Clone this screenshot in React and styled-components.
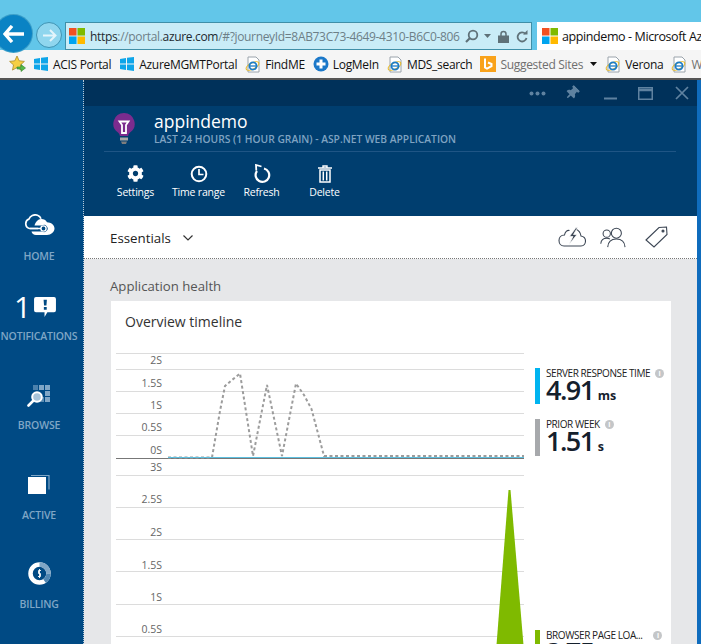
import React from "react";
import styled, { createGlobalStyle } from "styled-components";
import { FaCog, FaThumbtack } from "react-icons/fa";

const Global = createGlobalStyle`
  html, body { margin: 0; padding: 0; background: #fff; }
  * { box-sizing: border-box; }
  svg { flex: none; }
`;
const FONT = `"Open Sans", "Noto Sans", "Liberation Sans", sans-serif`;

const Root = styled.div`
  width: 701px; height: 644px; overflow: hidden; display: flex; flex-direction: column;
  font-family: ${FONT};
`;
const ChromeTop = styled.div`
  height: 50px; flex: none; background: #62c6e9; display: flex; align-items: flex-start;
  padding-top: 15px; position: relative;
`;
const BackButton = styled.div`
  width: 37px; height: 37px; margin-left: -5px; border-radius: 50%; background: #0a83c4;
  display: flex; align-items: center; justify-content: center; flex: none;
  box-shadow: 0 0 0 1px #3c9fc9;
`;
const ForwardButton = styled.div`
  width: 26px; height: 26px; margin: 7px 0 0 4px; border-radius: 50%; background: #8fd6ee;
  border: 1px solid #3f94b4; display: flex; align-items: center; justify-content: center; flex: none;
`;
const AddressBar = styled.div`
  width: 467px; height: 28px; margin: 7px 0 0 3px; background: #c9ecf7; border: 1px solid #3f8fa8;
  display: flex; align-items: center; padding-left: 3px; flex: none;
`;
const UrlText = styled.div`
  font-size: 12px; letter-spacing: -0.33px; color: #6d7f87; margin-left: 5px; white-space: nowrap; width: 372px; overflow: hidden;
  b { font-weight: 400; color: #1e2a30; }
`;
const AddressTools = styled.div`
  display: flex; align-items: center; gap: 7px; margin-left: 3px;
`;
const Caret = styled.svg`
  margin-left: -2px;
`;
const Tab = styled.div`
  width: 166px; height: 28px; margin: 7px 0 0 5px; background: #fff; display: flex; align-items: center;
  padding-left: 5px; font-size: 12.5px; letter-spacing: -0.4px; color: #111; white-space: nowrap; overflow: hidden; flex: none;
  span { margin-left: 4px; }
`;
const Bookmarks = styled.div`
  height: 30px; flex: none; background: #f5f5f5; border-bottom: 2px solid #555; display: flex; align-items: center;
  padding-left: 9px; white-space: nowrap; overflow: hidden;
`;
const Bookmark = styled.div`
  display: flex; align-items: center; gap: 4px; font-size: 12px; letter-spacing: -0.3px; flex: none;
  margin-left: ${(p) => p.$gap ?? 8}px; color: ${(p) => (p.$muted ? "#6f6f6f" : "#111")};
`;
const BookmarkCaret = styled.svg`
  margin-left: 3px;
`;
const Main = styled.div`
  flex: 1; display: flex; min-height: 0;
`;
const Sidebar = styled.nav`
  width: 84px; flex: none; background: #004a84; border-right: 1px dotted #b8c8d6; display: flex; flex-direction: column;
  padding-right: 5px;
`;
const NavItem = styled.div`
  height: ${(p) => p.$h}px; flex: none; display: flex; flex-direction: column; align-items: center; justify-content: flex-end;
  color: #7fa6c6; font-size: 10.5px; font-weight: 600;
`;
const NavIcon = styled.div`
  display: flex; align-items: center; justify-content: center; height: 40px; margin-bottom: ${(p) => p.$mb}px; color: #fff;
`;
const NavNumber = styled.span`
  font-size: 30px; font-weight: 400; color: #fff; line-height: 40px; margin: 0 3px 0 -8px;
`;
const NavLabel = styled.div`
  line-height: 14px; letter-spacing: -0.2px; white-space: nowrap;
`;
const Blade = styled.div`
  flex: 1; min-width: 0; display: flex; flex-direction: column; border-right: 4px solid #0f6cbd; position: relative;
`;
const TitleBar = styled.div`
  height: 26px; flex: none; background: #00315a; display: flex; align-items: center; justify-content: flex-end;
  color: #5f82a0;
`;
const WinButton = styled.div`
  width: ${(p) => p.$w}px; display: flex; justify-content: center; align-items: center; flex: none;
`;
const Header = styled.header`
  height: 110px; flex: none; background: #003e6f; padding: 0 21px 0 20px; color: #fff; display: flex; flex-direction: column;
`;
const TitleRow = styled.div`
  height: 46px; flex: none; border-bottom: 1px solid #1f5585; display: flex; align-items: center; padding: 0 0 0 9px;
`;
const TitleText = styled.div`
  margin-left: 19px; display: flex; flex-direction: column;
`;
const Title = styled.div`
  font-size: 17.5px; line-height: 22px; margin-top: -2px;
`;
const Subtitle = styled.div`
  font-size: 10.25px; line-height: 13px; font-weight: 600; color: #7fa3c2; white-space: nowrap; margin-top: 1px;
`;
const Toolbar = styled.div`
  display: flex; margin-top: 11px;
`;
const ToolButton = styled.div`
  width: 63px; display: flex; flex-direction: column; align-items: center; font-size: 10.5px; letter-spacing: -0.2px; white-space: nowrap;
`;
const ToolIcon = styled.div`
  height: 21px; display: flex; align-items: center; justify-content: center; margin-bottom: 1px;
`;
const EssentialsBar = styled.div`
  height: 43px; flex: none; background: #fff; border-bottom: 1px dotted #777; display: flex; align-items: center;
  padding: 2px 29px 0 26px; font-size: 13.3px; color: #222;
`;
const Chevron = styled.svg`
  margin-left: 12px;
`;
const EssentialIcons = styled.div`
  margin-left: auto; display: flex; align-items: center; margin-top: -2px;
`;
const EssentialIcon = styled.div`
  display: flex; margin-left: ${(p) => p.$ml}px;
`;
const Content = styled.div`
  flex: 1; background: #e6e7e9; padding: 17px 26px 0 26px; min-height: 0; display: flex; flex-direction: column;
`;
const SectionTitle = styled.div`
  font-size: 13.2px; color: #555; line-height: 20px; margin-bottom: 5px;
`;
const Card = styled.section`
  flex: 1; background: #fff; margin-left: 1px; min-height: 0; display: flex; flex-direction: column; overflow: hidden;
`;
const CardTitle = styled.div`
  font-size: 14px; color: #333; padding: 11px 14px 0; line-height: 20px; height: 45px; flex: none;
`;
const ChartRow = styled.div`
  display: flex; flex: 1; min-height: 0;
`;
const ChartSvg = styled.svg`
  width: 413px; height: 299px; flex: none; display: block;
`;
const Legend = styled.div`
  margin-left: 11px; padding-top: 22px; display: flex; flex-direction: column; min-width: 0;
`;
const Metric = styled.div`
  display: flex; height: ${(p) => p.$h}px; margin-bottom: ${(p) => p.$mb}px; flex: none;
`;
const MetricBar = styled.div`
  width: 5px; background: ${(p) => p.$c}; margin-right: 6px; flex: none;
`;
const MetricBody = styled.div`
  display: flex; flex-direction: column; color: #14202c;
`;
const MetricLabel = styled.div`
  font-size: 10px; line-height: 11px; letter-spacing: -0.42px; white-space: nowrap; display: flex; align-items: center; color: #222;
`;
const Info = styled.span`
  width: 9px; height: 9px; border-radius: 50%; background: #c4c6c8; color: #fff; font-size: 7px; font-weight: 700;
  display: inline-flex; align-items: center; justify-content: center; margin-left: ${(p) => p.$ml ?? 5}px; line-height: 1; letter-spacing: 0;
`;
const MetricValue = styled.div`
  font-size: 27px; line-height: 27px; font-weight: 600; letter-spacing: -1.5px; white-space: nowrap; margin-top: -3px;
  small { font-size: 12.5px; font-weight: 700; margin-left: 4px; letter-spacing: 0; }
`;

const WinLogo = () => (
  <svg width="16" height="16" viewBox="0 0 16 16">
    <path fill="#0ea5e9" d="M1 3l6-1v5.5H1zM8 1.8L15 1v6.5H8zM1 8.5h6V14l-6-1zM8 8.5h7V15l-7-1z" />
  </svg>
);
const MsLogo = ({ s = 16 }) => (
  <svg width={s} height={s} viewBox="0 0 16 16">
    <rect width="7.5" height="7.5" fill="#f25022" />
    <rect x="8.5" width="7.5" height="7.5" fill="#7fba00" />
    <rect y="8.5" width="7.5" height="7.5" fill="#00a4ef" />
    <rect x="8.5" y="8.5" width="7.5" height="7.5" fill="#ffb900" />
  </svg>
);
const IeIcon = () => (
  <svg width="16" height="17" viewBox="0 0 16 17">
    <path d="M3 1h8l3 3v12H3z" fill="#fff" stroke="#9aa3ab" />
    <ellipse cx="7.5" cy="10" rx="7" ry="3" fill="none" stroke="#e8b923" strokeWidth="1.1" transform="rotate(-28 7.5 10)" />
    <circle cx="8" cy="10" r="3.6" fill="none" stroke="#1c7cc7" strokeWidth="1.8" />
    <path d="M4.8 10h6.4" stroke="#1c7cc7" strokeWidth="1.3" />
  </svg>
);
const BingIcon = () => (
  <svg width="16" height="16" viewBox="0 0 16 16">
    <rect width="16" height="16" fill="#f9a21b" />
    <path d="M5 2.5v9l2 1.2 4.5-2.5V8L8 6.5" fill="none" stroke="#fff" strokeWidth="2" />
  </svg>
);
const LogMeIn = () => (
  <svg width="16" height="16" viewBox="0 0 16 16">
    <circle cx="8" cy="8" r="7.5" fill="#1b78c9" />
    <path d="M8 3.5v9M3.5 8h9" stroke="#fff" strokeWidth="3" />
  </svg>
);
const Star = () => (
  <svg width="17" height="18" viewBox="0 0 17 18">
    <path d="M8 1l2.2 4.8 5.2.6-3.9 3.5 1 5.2L8 12.500l-4.500 2.600 1-5.200L.6 6.400l5.200-.6z" fill="#f6cf45" stroke="#a98a2a" strokeWidth=".8" />
    <path d="M8 12h4V9.500l4.500 3.500-4.500 3.500V14H8z" fill="#54b948" stroke="#2f7f2a" strokeWidth=".6" />
  </svg>
);

const ClockIcon = () => (
  <svg width="18" height="18" viewBox="0 0 18 18">
    <circle cx="9" cy="9" r="7.300" fill="none" stroke="#fff" strokeWidth="2" />
    <path d="M9 4v5.500h4.500" fill="none" stroke="#fff" strokeWidth="1.700" />
  </svg>
);
const RefreshIcon = () => (
  <svg width="18" height="20" viewBox="0 0 18 20" fill="none" stroke="#fff">
    <path d="M11 4.500A6.800 6.800 0 1 1 4 7" strokeWidth="2.200" />
    <path d="M8.500 2.500L3 1l.3 5.500" strokeWidth="1.800" />
  </svg>
);
const TrashIcon = () => (
  <svg width="14" height="18" viewBox="0 0 14 18">
    <path d="M0 3h14M5 3V1h4v2" fill="none" stroke="#fff" strokeWidth="1.400" />
    <path d="M2 5h10v12H2z" fill="none" stroke="#fff" strokeWidth="1.500" />
    <path d="M5.300 6.500v9M8.700 6.500v9" stroke="#fff" strokeWidth="1.500" />
  </svg>
);
const BulbIcon = () => (
  <svg width="22" height="32" viewBox="0 0 22 32">
    <path d="M11 0a10.700 10.700 0 0 0-6 19.500c1 .8 1.700 2 1.900 3.500h8.200c.2-1.500.9-2.700 1.900-3.500A10.700 10.700 0 0 0 11 0z" fill="#7b2c8e" />
    <path d="M6.500 8.500h9L13 12v8h-4v-8z" fill="none" stroke="#fff" strokeWidth="1.800" />
    <path d="M7 24.500h8v3H7z" fill="#a6a6a6" />
    <path d="M8 28.500h6l-1 2.500H9z" fill="#7d7d7d" />
  </svg>
);
const CloudBolt = () => (
  <svg width="28" height="21" viewBox="0 0 28 21" fill="none" stroke="#3c4654" strokeWidth="1.100">
    <path d="M11.500 3.500C9 3 7 5 6.500 8 3 8 1 10.500 1 13.500 1 16.500 3 19 6 19h17c3 0 4.500-2.500 4.500-5 0-3-2-4.500-4.500-5C22.500 5.500 20 3 17.500 2" />
    <path d="M18 .5l-6.500 9H15l-4 8 8-10h-3.500L19.500.5z" fill="#3c4654" stroke="#fff" strokeWidth=".7" />
  </svg>
);
const UsersIcon = () => (
  <svg width="26" height="21" viewBox="0 0 27 21" fill="none" stroke="#3c4654" strokeWidth="1.100">
    <circle cx="7" cy="6.500" r="3.800" />
    <circle cx="17" cy="6" r="5.200" />
    <path d="M.8 17c.3-3.500 2.500-5.700 6.200-5.700 1.300 0 2.500.3 3.300.8" />
    <path d="M8 20.500c.3-5 3.500-8.500 9-8.500s8.800 3.500 9 8.500" />
  </svg>
);
const TagIcon = () => (
  <svg width="23" height="22" viewBox="0 0 23 22" fill="none" stroke="#3c4654" strokeWidth="1.100">
    <path d="M1 14L14 1.500 21.500 1 22 8.500 9 21z" />
    <circle cx="18" cy="5" r="1" fill="#3c4654" />
  </svg>
);
const HomeIcon = () => (
  <svg width="32" height="21" viewBox="0 0 32 21">
    <path d="M15 14.500H6.500a5 5 0 0 1-.5-9.500C7 2 11 0 14.500 1.200c2 .7 3 2 3.500 3.500" fill="none" stroke="#fff" strokeWidth="1.700" />
    <path d="M18 5a6.500 6.500 0 0 1 6 3.200c4 0 7.500 2.800 7.500 6.300S28 21 24 21H13c-2.500 0-4-1.500-4.500-3.500h10.500a3.600 3.600 0 1 0 0-6H11.500C12.500 8 15 5 18 5z" fill="#fff" />
    <circle cx="20.500" cy="14.500" r="2.600" fill="none" stroke="#fff" strokeWidth="1.400" />
    <path d="M7 14.500h11" stroke="#fff" strokeWidth="1.500" />
  </svg>
);
const BubbleIcon = () => (
  <svg width="22" height="20" viewBox="0 0 23 21">
    <path d="M2 0h19a2 2 0 0 1 2 2v12a2 2 0 0 1-2 2h-7l-3 5v-5H2a2 2 0 0 1-2-2V2a2 2 0 0 1 2-2z" fill="#fff" />
    <path d="M10 3h3.500l-.5 6h-2.500zM10.300 10.500h3v2.800h-3z" fill="#004a84" />
  </svg>
);
const BrowseIcon = () => (
  <svg width="24" height="22" viewBox="0 0 24 22">
    <g fill="#7fa6c6">
      <rect x="12" y="0" width="5" height="5" /><rect x="18" y="0" width="5" height="5" />
      <rect x="6" y="0" width="5" height="5" opacity=".6" />
      <rect x="18" y="6" width="5" height="5" /><rect x="18" y="12" width="5" height="5" />
      <rect x="12" y="12" width="5" height="5" opacity=".7" />
    </g>
    <circle cx="10" cy="12" r="4.800" fill="#a8c4da" stroke="#fff" strokeWidth="2" />
    <path d="M6 16l-4.500 4.500" stroke="#fff" strokeWidth="2.600" strokeLinecap="round" />
  </svg>
);
const ActiveIcon = () => (
  <svg width="22" height="19" viewBox="0 0 22 19">
    <path d="M3 .5h18v14" fill="none" stroke="#7fa6c6" strokeWidth="1.200" />
    <rect x="0" y="2" width="18" height="17" fill="#fff" />
  </svg>
);
const BillingIcon = () => (
  <svg width="23" height="23" viewBox="0 0 23 23">
    <circle cx="11.500" cy="11.500" r="9" fill="none" stroke="#fff" strokeWidth="4.500" />
    <path d="M11.500 2.500a9 9 0 0 1 9 9" fill="none" stroke="#7fa6c6" strokeWidth="4.500" />
    <path d="M20.500 11.500a9 9 0 0 1-4 7.500" fill="none" stroke="#4f86b2" strokeWidth="4.500" />
    <circle cx="11.500" cy="11.500" r="5" fill="#004a84" />
    <path d="M13 8.500h-2.500v3h2v3H10M11.500 7v9" fill="none" stroke="#fff" strokeWidth=".9" />
  </svg>
);

const grid1 = [352, 368, 390, 412, 434];
const grid2 = [474, 506, 538, 570, 603, 635];
const labels = [
  ["2S", 363], ["1.5S", 386], ["1S", 408], ["0.5S", 430], ["0S", 453], ["3S", 470],
  ["2.5S", 502], ["2S", 535], ["1.5S", 568], ["1S", 600], ["0.5S", 632],
];

const Chart = () => (
  <ChartSvg viewBox="111 345 413 299">
    {[...grid1, ...grid2].map((y) => (
      <line key={y} x1="116" x2="524" y1={y + 0.5} y2={y + 0.5} stroke="#dcdcdc" strokeWidth="1" />
    ))}
    <line x1="116" x2="524" y1="457.500" y2="457.500" stroke="#777" strokeWidth="1.200" />
    <path
      d="M168 456.500H212L220 410 225 385 232 379 240 372.500 253 455 267 384 282 455 296 382.500 304 394 311.500 408 324 455H524"
      fill="none" stroke="#9c9c9c" strokeWidth="2" strokeDasharray="3 2.500"
    />
    <line x1="168" x2="524" y1="456.500" y2="456.500" stroke="#5cc0e0" strokeWidth="1.200" />
    {labels.map(([t, y]) => (
      <text key={t + y} x="162" y={y} textAnchor="end" fontSize="10.500" fill="#666" fontFamily={FONT}>{t}</text>
    ))}
    <path d="M508.500 489h2L523.500 644h-27z" fill="#7fba00" />
  </ChartSvg>
);

export default function App() {
  return (
    <Root>
      <Global />
      <ChromeTop>
        <BackButton>
          <svg width="22" height="18" viewBox="0 0 22 18">
            <path d="M9 1L2 9l7 8M3 9h18" fill="none" stroke="#fff" strokeWidth="3.400" />
          </svg>
        </BackButton>
        <ForwardButton>
          <svg width="15" height="13" viewBox="0 0 15 13">
            <path d="M8 1l5.500 5.500L8 12M13 6.500H1" fill="none" stroke="#e4f5fb" strokeWidth="2" />
          </svg>
        </ForwardButton>
        <AddressBar>
          <MsLogo />
          <UrlText>
            <b>https</b>://portal.<b>azure.com</b>/#?journeyId=8AB73C73-4649-4310-B6C0-806
          </UrlText>
          <AddressTools>
            <svg width="14" height="14" viewBox="0 0 14 14">
              <circle cx="8" cy="6" r="4.300" fill="none" stroke="#5f7178" strokeWidth="1.800" />
              <path d="M5 9l-4 4" stroke="#5f7178" strokeWidth="2.200" />
            </svg>
            <Caret width="7" height="4" viewBox="0 0 7 4"><path d="M0 0h7L3.500 4z" fill="#5f7178" /></Caret>
            <svg width="11" height="13" viewBox="0 0 11 13">
              <path d="M3 6V4a2.500 2.500 0 0 1 5 0v2" fill="none" stroke="#5f7178" strokeWidth="1.500" />
              <rect y="5.500" width="11" height="7.500" fill="#5f7178" />
            </svg>
            <svg width="12" height="13" viewBox="0 0 12 13">
              <path d="M9.500 4A4.500 4.500 0 1 0 10.500 8" fill="none" stroke="#5f7178" strokeWidth="1.800" />
              <path d="M7 4.500h4.500V0z" fill="#5f7178" />
            </svg>
          </AddressTools>
        </AddressBar>
        <Tab>
          <MsLogo />
          <span>appindemo - Microsoft Azure</span>
        </Tab>
      </ChromeTop>
      <Bookmarks>
        <Star />
        <Bookmark $gap={7}><WinLogo />ACIS Portal</Bookmark>
        <Bookmark><WinLogo />AzureMGMTPortal</Bookmark>
        <Bookmark><IeIcon />FindME</Bookmark>
        <Bookmark><LogMeIn />LogMeIn</Bookmark>
        <Bookmark><IeIcon />MDS_search</Bookmark>
        <Bookmark $muted><BingIcon />Suggested Sites
          <BookmarkCaret width="7" height="4" viewBox="0 0 7 4"><path d="M0 0h7L3.500 4z" fill="#111" /></BookmarkCaret>
        </Bookmark>
        <Bookmark><IeIcon />Verona</Bookmark>
        <Bookmark $muted><IeIcon />Web Slice Gallery</Bookmark>
      </Bookmarks>
      <Main>
        <Sidebar>
          <NavItem $h={183}><NavIcon $mb={5}><HomeIcon /></NavIcon><NavLabel>HOME</NavLabel></NavItem>
          <NavItem $h={80}>
            <NavIcon $mb={2}><NavNumber>1</NavNumber><BubbleIcon /></NavIcon><NavLabel>NOTIFICATIONS</NavLabel>
          </NavItem>
          <NavItem $h={89}><NavIcon $mb={2}><BrowseIcon /></NavIcon><NavLabel>BROWSE</NavLabel></NavItem>
          <NavItem $h={90}><NavIcon $mb={4}><ActiveIcon /></NavIcon><NavLabel>ACTIVE</NavLabel></NavItem>
          <NavItem $h={89}><NavIcon $mb={4}><BillingIcon /></NavIcon><NavLabel>BILLING</NavLabel></NavItem>
        </Sidebar>
        <Blade>
          <TitleBar>
            <WinButton $w={20}>
              <svg width="17" height="5" viewBox="0 0 17 5" fill="currentColor">
                <circle cx="2.500" cy="2.500" r="2" /><circle cx="8.500" cy="2.500" r="2" /><circle cx="14.500" cy="2.500" r="2" />
              </svg>
            </WinButton>
            <WinButton $w={50}><FaThumbtack size={14} style={{ transform: "rotate(45deg)" }} /></WinButton>
            <WinButton $w={26}>
              <svg width="13" height="14" viewBox="0 0 13 14"><path d="M0 12.500h13" stroke="currentColor" strokeWidth="2" /></svg>
            </WinButton>
            <WinButton $w={44}>
              <svg width="15" height="13" viewBox="0 0 15 13" fill="none" stroke="currentColor">
                <rect x=".75" y=".75" width="13.500" height="11.500" strokeWidth="1.500" /><path d="M1 3h13" strokeWidth="2.500" />
              </svg>
            </WinButton>
            <WinButton $w={30}>
              <svg width="14" height="14" viewBox="0 0 14 14"><path d="M1 1l12 12M13 1L1 13" stroke="currentColor" strokeWidth="1.700" /></svg>
            </WinButton>
          </TitleBar>
          <Header>
            <TitleRow>
              <BulbIcon />
              <TitleText>
                <Title>appindemo</Title>
                <Subtitle>LAST 24 HOURS (1 HOUR GRAIN) - ASP.NET WEB APPLICATION</Subtitle>
              </TitleText>
            </TitleRow>
            <Toolbar>
              <ToolButton><ToolIcon><FaCog size={17} /></ToolIcon>Settings</ToolButton>
              <ToolButton><ToolIcon><ClockIcon /></ToolIcon>Time range</ToolButton>
              <ToolButton><ToolIcon><RefreshIcon /></ToolIcon>Refresh</ToolButton>
              <ToolButton><ToolIcon><TrashIcon /></ToolIcon>Delete</ToolButton>
            </Toolbar>
          </Header>
          <EssentialsBar>
            Essentials
            <Chevron width="10" height="6" viewBox="0 0 10 6"><path d="M.5.500L5 5 9.500.5" fill="none" stroke="#333" strokeWidth="1.200" /></Chevron>
            <EssentialIcons>
              <EssentialIcon $ml={0}><CloudBolt /></EssentialIcon>
              <EssentialIcon $ml={14}><UsersIcon /></EssentialIcon>
              <EssentialIcon $ml={19}><TagIcon /></EssentialIcon>
            </EssentialIcons>
          </EssentialsBar>
          <Content>
            <SectionTitle>Application health</SectionTitle>
            <Card>
              <CardTitle>Overview timeline</CardTitle>
              <ChartRow>
                <Chart />
                <Legend>
                  <Metric $h={36} $mb={15}>
                    <MetricBar $c="#00b4f0" />
                    <MetricBody>
                      <MetricLabel>SERVER RESPONSE TIME<Info>i</Info></MetricLabel>
                      <MetricValue>4.91<small>ms</small></MetricValue>
                    </MetricBody>
                  </Metric>
                  <Metric $h={37} $mb={174}>
                    <MetricBar $c="#a7a9ac" />
                    <MetricBody>
                      <MetricLabel>PRIOR WEEK<Info>i</Info></MetricLabel>
                      <MetricValue>1.51<small>s</small></MetricValue>
                    </MetricBody>
                  </Metric>
                  <Metric $h={36} $mb={0}>
                    <MetricBar $c="#7fba00" />
                    <MetricBody>
                      <MetricLabel>BROWSER PAGE LOA...<Info $ml={11}>i</Info></MetricLabel>
                      <MetricValue>3.75<small>s</small></MetricValue>
                    </MetricBody>
                  </Metric>
                </Legend>
              </ChartRow>
            </Card>
          </Content>
        </Blade>
      </Main>
    </Root>
  );
}
